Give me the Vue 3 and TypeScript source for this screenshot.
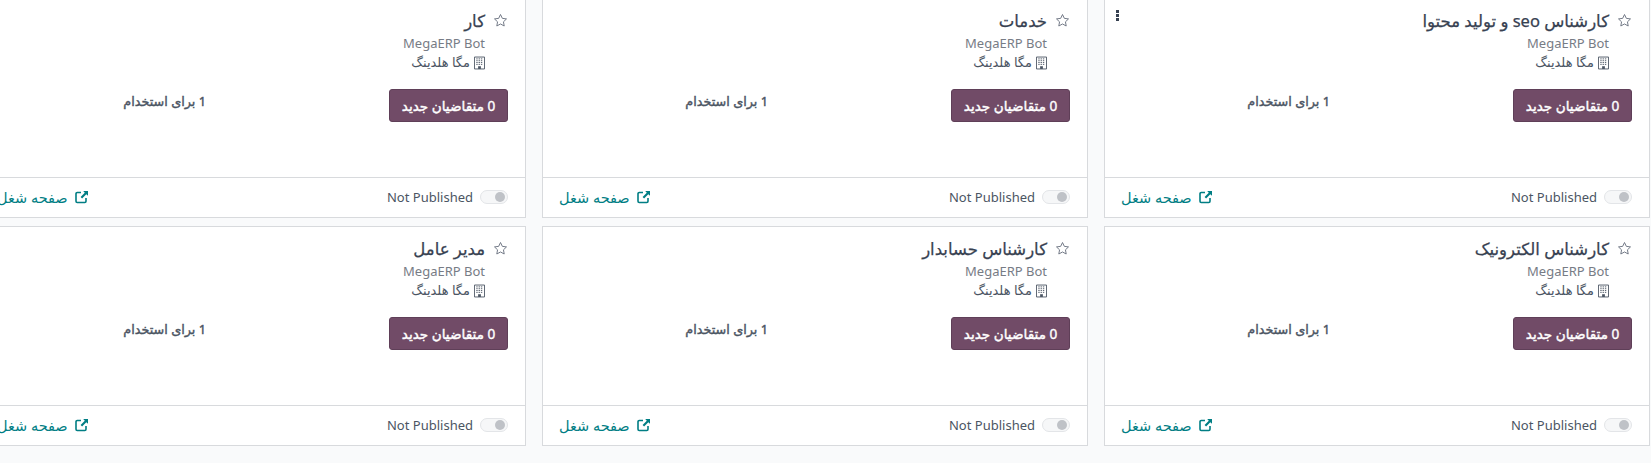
<script setup lang="ts">
const titles: string[] = ['کارشناس seo و تولید محتوا', 'خدمات', 'کار', 'کارشناس الکترونیک', 'کارشناس حسابدار', 'مدیر عامل']
</script>

<template>
  <div class="page">
    <article v-for="(title, i) in titles" :key="title" class="card" dir="rtl">
      <span v-if="i === 0" class="kebab"><i></i><i></i><i></i></span>
      <div class="body">
        <div class="head">
          <svg class="star" viewBox="0 0 16 16"><path d="M8 1.6l1.95 4.1 4.45.6-3.25 3.1.8 4.45L8 11.7l-3.95 2.15.8-4.45L1.6 6.3l4.45-.6z" fill="none" stroke="#6b7280" stroke-width="1" stroke-linejoin="round"/></svg>
          <span class="title">{{ title }}</span>
        </div>
        <div class="info">
          <div class="owner" dir="ltr">MegaERP Bot</div>
          <div class="company">
            <svg class="building" viewBox="0 0 12 14"><path d="M.5.5h11v13H.5z" fill="#fff" stroke="#4b5563"/><path d="M2.5 2.5h7M2.5 4.5h7M2.5 6.5h7M2.5 8.5h7" stroke="#4b5563" stroke-dasharray="1.5 1"/><path d="M4.5 10.5h3v3h-3z" fill="#4b5563"/></svg>
            <span>مگا هلدینگ</span>
          </div>
        </div>
        <div class="actions">
          <button class="new-btn" type="button">0 متقاضیان جدید</button>
          <div class="to-hire">1 برای استخدام</div>
        </div>
      </div>
      <footer class="foot">
        <div class="publish">
          <span class="switch"><b></b></span>
          <span dir="ltr">Not Published</span>
        </div>
        <a class="job-link" href="#">
          <svg class="ext" viewBox="0 0 14 14"><path d="M6 2.5H2.2A1.2 1.2 0 0 0 1 3.7v7.6a1.2 1.2 0 0 0 1.2 1.2h7.6a1.2 1.2 0 0 0 1.2-1.2V8" fill="none" stroke="#017e84" stroke-width="1.6"/><path d="M8.2 1H13v4.8l-1.7-1.6-4.2 4.2-1.5-1.5 4.2-4.2z" fill="#017e84"/></svg>
          <span>صفحه شغل</span>
        </a>
      </footer>
    </article>
  </div>
</template>

<style scoped>
.page {
  display: grid;
  direction: rtl;
  grid-template-columns: repeat(3, 546px);
  grid-auto-rows: 220px;
  column-gap: 16px;
  row-gap: 8px;
  width: 1669px;
  height: 465px;
  box-sizing: border-box;
  margin-left: -19px;
  margin-top: -2px;
  overflow: hidden;
  background: #f9fafb;
  font-family: "Noto Sans", "DejaVu Sans", sans-serif;
  color: #374151;
}
.card {
  position: relative;
  display: flex;
  flex-direction: column;
  box-sizing: border-box;
  background: #fff;
  border: 1px solid #d8dadd;
}
.kebab {
  position: absolute;
  top: 11px;
  left: 11px;
  display: flex;
  flex-direction: column;
  gap: 1px;
}
.kebab i {
  width: 3px;
  height: 3px;
  background: #374151;
}
.body {
  flex: 1;
  display: flex;
  flex-direction: column;
  padding: 9px 17px 0 16px;
}
.head {
  display: flex;
  align-items: center;
  gap: 8px;
  height: 24px;
}
.star {
  width: 15px;
  height: 15px;
}
.title {
  font-size: 16.5px;
  color: #374151;
  -webkit-text-stroke: 0.25px #374151;
}
.info {
  padding-right: 23px;
  font-size: 13px;
  line-height: 19px;
}
.owner {
  color: #777c85;
  text-align: right;
  margin-top: 2px;
}
.company {
  display: flex;
  align-items: center;
  gap: 4px;
  color: #4b5563;
  font-size: 13px;
}
.building {
  width: 11px;
  height: 14px;
}
.actions {
  display: flex;
  margin-top: 17px;
}
.new-btn {
  width: 119px;
  height: 33px;
  padding: 0;
  border: 1px solid #5f3f58;
  border-radius: 3px;
  background: #714b67;
  color: #fff;
  font: 400 13.6px "Noto Sans", "DejaVu Sans", sans-serif;
  -webkit-text-stroke: 0.4px #fff;
}
.to-hire {
  margin-right: 183px;
  margin-top: 3px;
  font-size: 12.8px;
  color: #4b5563;
  -webkit-text-stroke: 0.4px #4b5563;
}
.foot {
  height: 40px;
  flex: none;
  box-sizing: border-box;
  display: flex;
  align-items: center;
  justify-content: space-between;
  padding: 0 17px 2px 16px;
  border-top: 1px solid #d8dadd;
  font-size: 13px;
}
.publish {
  display: flex;
  align-items: center;
  gap: 7px;
  color: #4b5563;
}
.switch {
  display: flex;
  align-items: center;
  box-sizing: border-box;
  width: 28px;
  height: 14px;
  padding: 0 2px;
  border: 1px solid #e3e5e8;
  border-radius: 7px;
  background: #f6f7f8;
}
.switch b {
  width: 10px;
  height: 10px;
  border-radius: 50%;
  background: #bfc2c7;
}
.job-link {
  display: flex;
  align-items: center;
  gap: 7px;
  color: #017e84;
  text-decoration: none;
  font-size: 14.5px;
}
.ext {
  width: 14px;
  height: 14px;
}
</style>

<style>
html, body {
  margin: 0;
  background: #f9fafb;
  overflow: hidden;
}
</style>
